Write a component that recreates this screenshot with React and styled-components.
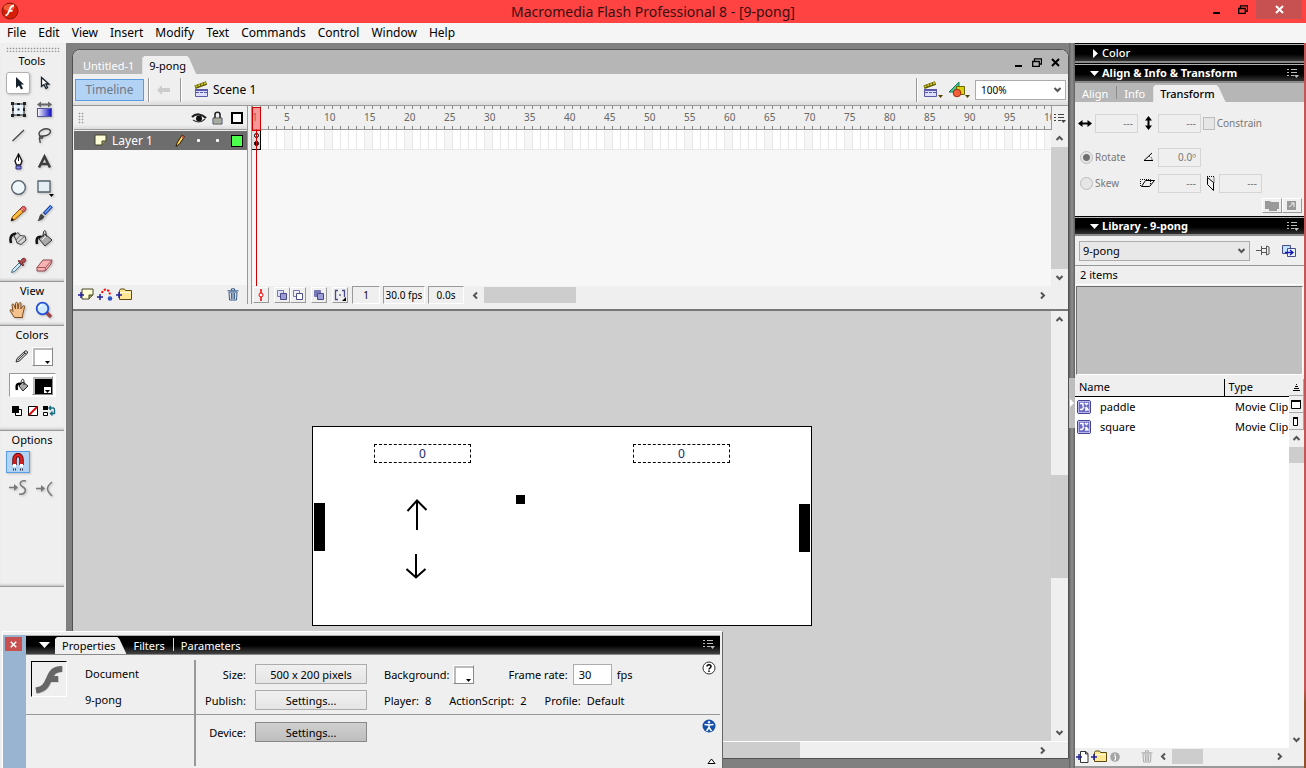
import React, { useState } from "react";

import styled, { createGlobalStyle, css } from "styled-components";

const GlobalStyle = createGlobalStyle`
  * {
    box-sizing: border-box;
  }

  body {
    margin: 0;
    overflow: hidden;
    font-family: "Noto Sans", "Open Sans", sans-serif;
    font-size: 11px;
    color: #000;
    background: #efefef;
  }

  button,
  input,
  select {
    font: inherit;
    color: inherit;
    margin: 0;
    padding: 0;
    border: 0;
    border-radius: 0;
    background: none;
    appearance: none;
    outline: none;
  }

  svg {
    display: block;
    flex-shrink: 0;
  }
`;

const Window = styled.div`
  height: 100vh;
  display: flex;
  flex-direction: column;
`;

const TitleBar = styled.header`
  height: 23px;
  flex-shrink: 0;
  display: grid;
  grid-template-columns: 110px 1fr 110px;
  background: #ff4242;

  h1 {
    margin: 0;
    font-size: 14px;
    line-height: 23px;
    font-weight: 400;
    text-align: center;
    color: #3a0f0f;
  }
`;

const TitleIcon = styled.div`
  padding: 2px 1px;
`;

const WindowButtons = styled.div`
  display: flex;
  justify-content: flex-end;
  padding-right: 4px;

  button {
    width: 26px;
    height: 19px;
    display: flex;
    align-items: center;
    justify-content: center;
  }

  button:last-child {
    width: 46px;
    color: #fff;
    background: #c75050;
  }
`;

const MenuBar = styled.nav`
  height: 20px;
  flex-shrink: 0;
  display: flex;
  gap: 12px;
  padding-left: 7px;
  background: #f5f5f5;

  button {
    font-size: 12px;
    line-height: 20px;
  }
`;

const Workspace = styled.div`
  flex: 1;
  min-height: 0;
  display: flex;
  background: #808080;
`;

/* ---- tools ---- */

const ToolsPanel = styled.aside`
  width: 66px;
  flex-shrink: 0;
  padding-top: 4px;
  background: #efefef;
`;

const Grip = styled.div`
  height: 5px;
  margin: 0 6px;
  background-image: radial-gradient(#999 40%, transparent 50%);
  background-size: 3px 3px;
`;

const ToolSection = styled.section`
  width: 64px;
  min-height: ${({ $height }) => $height}px;
  border-bottom: 1px solid #999;
  box-shadow: inset 0 -3px 3px -2px #bbb;

  h2 {
    margin: 0;
    font-size: 11px;
    line-height: 18px;
    font-weight: 400;
    text-align: center;
  }
`;

const ToolGrid = styled.div`
  display: grid;
  grid-template-columns: 26px 26px;
  grid-auto-rows: ${({ $row }) => $row}px;
  padding-left: 5px;
  align-items: center;
  justify-items: center;
`;

const ToolButton = styled.button`
  width: 24px;
  height: 22px;
  display: flex;
  align-items: center;
  justify-content: center;
  filter: drop-shadow(1px 1px 1px #0003);

  ${({ $selected }) =>
    $selected &&
    css`
      background: #fff;
      border: 1px solid #b0b0b0;
      border-radius: 3px;
    `}

  ${({ $snap }) =>
    $snap &&
    css`
      background: #b3d3f5;
      border: 1px solid #569de5;
    `}
`;

const ColorRows = styled.div`
  display: flex;
  flex-direction: column;
  gap: 5px;
`;

const ColorRow = styled.div`
  height: 24px;
  margin: 0 8px 0 9px;
  padding-left: 5px;
  display: flex;
  align-items: center;
  gap: 3px;
  background: ${({ $active }) => ($active ? "#fff" : "none")};
  border: 1px solid;
  border-color: ${({ $active }) =>
    $active ? "#999 #fff #fff #999" : "transparent"};
`;

const MiniRow = styled.div`
  height: 18px;
  display: flex;
  align-items: center;
  gap: 4px;
  padding-left: 11px;
`;

const Swatch = styled.button`
  width: 21px;
  height: 19px;
  padding: 1px;
  display: flex;
  align-items: flex-end;
  justify-content: flex-end;
  border: 1px solid;
  border-color: #fff #888 #888 #fff;
  background: ${({ $color }) => $color};
  box-shadow: inset 1px 1px 0 1px #bbb;

  span {
    width: 7px;
    height: 6px;
    display: flex;
    align-items: flex-end;
    justify-content: center;
    background: #fff;
  }
`;

/* ---- document ---- */

const DocumentWindow = styled.main`
  flex: 1;
  min-width: 0;
  display: flex;
  flex-direction: column;
  margin: 6px 0 9px 6px;
  border: 1px solid #505050;
  border-radius: 8px 8px 0 0;
  background: #efefef;
  overflow: hidden;
`;

const DocTabs = styled.div`
  height: 24px;
  flex-shrink: 0;
  display: flex;
  align-items: flex-end;
  padding-right: 8px;
  background: #b6b6b6;
`;

const DocTab = styled.button`
  height: ${({ $active }) => ($active ? 18 : 20)}px;
  padding: ${({ $active }) => ($active ? "0 10px 0 7px" : "2px 8px 0 10px")};
  color: ${({ $active }) => ($active ? "#000" : "#fff")};
  background: ${({ $active }) => ($active ? "#efefef" : "none")};
  clip-path: ${({ $active }) =>
    $active
      ? "polygon(0 2px, 2px 0, calc(100% - 9px) 0, calc(100% - 7px) 2px, 100% 100%, 0 100%)"
      : "none"};
`;

const DocButtons = styled.div`
  margin-left: auto;
  height: 24px;
  display: flex;
  align-items: center;
  gap: 9px;
`;

const EditBar = styled.div`
  height: 32px;
  flex-shrink: 0;
  display: flex;
  align-items: center;
  padding: 0 2px;
  border-bottom: 1px solid #999;
  background: linear-gradient(#efefef 80%, #dcdcdc);
`;

const TimelineToggle = styled.button`
  width: 69px;
  height: 22px;
  font-size: 12px;
  color: #6d7885;
  background: #b3d3f5;
  border: 1px solid #569de5;
`;

const Divider = styled.span`
  width: 2px;
  height: 24px;
  margin: ${({ $gap }) => `0 ${$gap}px`};
  border-left: 1px solid #999;
  border-right: 1px solid #fff;
`;

const SceneName = styled.button`
  display: flex;
  align-items: center;
  gap: 4px;
  padding-left: 8px;
  font-size: 12px;
`;

const EditBarEnd = styled.div`
  margin-left: auto;
  display: flex;
  align-items: center;
  gap: 5px;
`;

const SelectBox = styled.div`
  display: grid;
  align-items: center;
  flex: ${({ $grow }) => ($grow ? 1 : "none")};

  select,
  svg {
    grid-area: 1 / 1;
  }

  select {
    width: ${({ $grow }) => ($grow ? "100%" : "91px")};
    height: 20px;
    padding-left: ${({ $grow }) => ($grow ? 3 : 5)}px;
    font-size: ${({ $grow }) => ($grow ? 11 : 10)}px;
    border: 1px solid #acacac;
    background: ${({ $grow }) => ($grow ? "#e8e8e8" : "#fff")};
  }

  svg {
    justify-self: end;
    margin-right: 4px;
    pointer-events: none;
  }
`;

const Timeline = styled.section`
  flex-shrink: 0;
  display: flex;
  border-bottom: 2px solid #777;
  padding-bottom: 5px;
`;

const Layers = styled.div`
  width: 175px;
  flex-shrink: 0;
  display: flex;
  flex-direction: column;
  padding-left: 1px;
  border-right: 1px solid #999;
`;

const LayerHeader = styled.div`
  height: 24px;
  display: flex;
  align-items: center;
  padding: 0 4px;
  border-bottom: 1px solid #999;
  background: linear-gradient(#efefef 80%, #dcdcdc);
`;

const LayerGrip = styled.span`
  width: 6px;
  height: 12px;
  margin-right: auto;
  background-image: radial-gradient(#999 40%, transparent 50%);
  background-size: 3px 3px;
`;

const LayerFlags = styled.div`
  display: grid;
  grid-template-columns: 18px 19px 19px 19px;
  justify-items: center;
  align-items: center;
  margin-right: -3px;
`;

const LayerRow = styled.div`
  height: 19px;
  margin-top: 1px;
  display: flex;
  align-items: center;
  gap: 5px;
  padding: 0 4px 0 20px;
  color: #fff;
  font-size: 12px;
  background: #6d6d6d;

  ${LayerFlags} {
    margin-left: auto;
  }
`;

const FlagDot = styled.i`
  width: 3px;
  height: 3px;
  border-radius: 1px;
  background: #fff;
`;

const Outline = styled.i`
  width: 12px;
  height: 12px;
  border: ${({ $color }) => ($color ? 1 : 2)}px solid #000;
  background: ${({ $color }) => $color || "#fff"};
`;

const LayerSpace = styled.div`
  flex: 1;
  background: #f7f7f7;
`;

const LayerFooter = styled.div`
  height: 19px;
  display: flex;
  align-items: center;
  gap: 3px;
  padding: 0 8px 0 4px;

  button:last-child {
    margin-left: auto;
  }
`;

const Frames = styled.div`
  flex: 1;
  min-width: 0;
  display: flex;
  flex-direction: column;
  margin-left: 3px;
  border-left: 1px solid #999;
`;

const FrameArea = styled.div`
  display: flex;
`;

const FrameTrack = styled.div`
  flex: 1;
  min-width: 0;
  overflow: hidden;
  position: relative;
  height: 180px;
  background: #f7f7f7;
`;

const Ruler = styled.div`
  height: 24px;
  display: flex;
  color: #666;
  font-size: 10px;
  line-height: 23px;
  border-bottom: 1px solid #999;
  background:
    repeating-linear-gradient(90deg, #888 0 1px, transparent 1px 8px) 0 0 / 100%
      3px no-repeat,
    repeating-linear-gradient(90deg, #888 0 1px, transparent 1px 8px) 0 100% /
      100% 3px no-repeat,
    #efefef;

  span {
    width: 40px;
    flex-shrink: 0;
  }

  span:first-child {
    width: 32px;
  }
`;

const FrameRow = styled.div`
  height: 20px;
  border-bottom: 1px solid #e8e8e8;
  background:
    repeating-linear-gradient(90deg, #e8e8e8 0 1px, transparent 1px 8px),
    repeating-linear-gradient(90deg, #fff 0 32px, #f6f6f6 32px 40px);
`;

const Keyframe = styled.div`
  width: 9px;
  height: 20px;
  display: flex;
  flex-direction: column;
  align-items: center;
  justify-content: space-evenly;
  border: 1px solid #000;
  border-width: 0 1px 1px 0;
  background: #ddd;

  i {
    width: 5px;
    height: 5px;
    border: 1px solid #000;
    border-radius: 3px;
  }

  i:last-child {
    background: #000;
  }
`;

/* lies over the ruler and every layer row */
const Playhead = styled.div`
  position: absolute;
  top: 1px;
  bottom: 0;
  left: 0;
  width: 9px;
  background: linear-gradient(#c00, #c00) 4px 22px / 1px 100% no-repeat;

  &::before {
    content: "";
    display: block;
    height: 22px;
    border: 1px solid #c00;
    background: #ff404080;
  }
`;

const FrameSide = styled.div`
  width: 17px;
  flex-shrink: 0;
  display: flex;
  flex-direction: column;
`;

const FrameMenu = styled.button`
  height: 24px;
  display: flex;
  align-items: center;
  justify-content: center;
  border-left: 1px solid #999;
`;

const FrameFooter = styled.div`
  height: 18px;
  display: flex;
  align-items: center;
  padding-left: 1px;
`;

const OnionButton = styled.button`
  width: 16px;
  height: 16px;
  margin-right: ${({ $gap }) => $gap || 0}px;
  display: flex;
  align-items: center;
  justify-content: center;
  border: 1px solid;
  border-color: #fff #999 #999 #fff;
`;

const StatusCell = styled.output`
  width: ${({ $width }) => $width}px;
  height: 18px;
  margin-right: 3px;
  font-size: 10px;
  line-height: 16px;
  text-align: center;
  white-space: nowrap;
  border: 1px solid;
  border-color: #999 #fff #fff #999;
`;

const StageRow = styled.div`
  flex: 1;
  min-height: 0;
  display: flex;
`;

const Pasteboard = styled.div`
  flex: 1;
  min-width: 0;
  display: flex;
  align-items: center;
  justify-content: center;
  background: #cfcfcf;
`;

const Stage = styled.div`
  position: relative;
  width: 500px;
  height: 200px;
  flex-shrink: 0;
  background: #fff;
  border: 1px solid #000;
`;

/* something placed freely on the stage */
const StageItem = styled.div`
  position: absolute;
  left: ${({ $x }) => $x}px;
  top: ${({ $y }) => $y}px;
  width: ${({ $w }) => $w}px;
  height: ${({ $h }) => $h}px;
  background: ${({ $fill }) => $fill || "none"};
`;

const ScoreText = styled(StageItem)`
  font-size: 12px;
  line-height: 17px;
  text-align: center;
  color: #1a2a66;
  border: 1px dashed #000;
`;

/* ---- scroll bars ---- */

const Bar = styled.div`
  display: flex;
  flex: ${({ $fixed }) => ($fixed ? "none" : 1)};
  min-width: 0;
  min-height: 0;
  flex-direction: ${({ $vertical }) => ($vertical ? "column" : "row")};
  ${({ $vertical }) => ($vertical ? "width" : "height")}: ${({ $size }) =>
    $size}px;
  background: #efefef;

  button {
    display: flex;
    align-items: center;
    justify-content: center;
    ${({ $vertical }) => ($vertical ? "height" : "width")}: 17px;
  }
`;

const BarPart = styled.span`
  flex: ${({ $part }) => $part} 1 0;
  background: ${({ $thumb }) => ($thumb ? "#cdcdcd" : "none")};
`;

const StageFooter = styled.div`
  height: 17px;
  flex-shrink: 0;
  display: flex;
  border-top: 1px solid #fff;
`;

/* ---- right dock ---- */

const Splitter = styled.div`
  width: 6px;
  flex-shrink: 0;
  display: flex;
  align-items: center;
  background: linear-gradient(90deg, #606060, #909090 50%, #606060);

  button {
    width: 6px;
    height: 50px;
    margin-bottom: 6px;
    background: #bdbdbd;
    display: flex;
    align-items: center;
  }
`;

const Dock = styled.aside`
  width: 229px;
  flex-shrink: 0;
  display: flex;
  flex-direction: column;
  background: #efefef;
`;

const WindowEdge = styled.div`
  width: 2px;
  flex-shrink: 0;
  background: linear-gradient(#c85555 89%, #94502a 91%);
`;

const PanelHeader = styled.div`
  height: 20px;
  flex-shrink: 0;
  display: flex;
  align-items: center;
  padding: 1px 5px 0 15px;
  color: #fff;
  border-top: 1px solid #000;
  border-bottom: 2px solid #8a8a8a;
  background: linear-gradient(#b0b0b0 1px, #000 1px, #000 60%, #333);

  h2 {
    margin: 0 auto 0 0;
    font-size: 11px;
    line-height: 16px;
    font-weight: ${({ $open }) => ($open ? 700 : 500)};
  }
`;

const Disclosure = styled.button`
  width: 12px;
  height: 12px;
  display: flex;
  align-items: center;
`;

const PanelTabs = styled.div`
  height: 19px;
  flex-shrink: 0;
  display: flex;
  align-items: flex-end;
  background: #b6b6b6;
`;

const PanelTab = styled.button`
  height: 17px;
  padding: ${({ $active }) => ($active ? "0 11px 0 7px" : "0 8px 0 7px")};
  line-height: 17px;
  color: ${({ $active }) => ($active ? "#000" : "#fff")};
  font-weight: ${({ $active }) => ($active ? 500 : 400)};
  background: ${({ $active }) => ($active ? "#efefef" : "none")};
  clip-path: ${({ $active }) =>
    $active
      ? "polygon(0 2px, 2px 0, calc(100% - 9px) 0, calc(100% - 7px) 2px, 100% 100%, 0 100%)"
      : "none"};
`;

const TransformForm = styled.div`
  flex-shrink: 0;
  height: 114px;
  color: #777;
  font-size: 10px;
  padding-top: 8px;
`;

const TransformRow = styled.div`
  display: grid;
  grid-template-columns: 20px 43px 20px 43px 18px 43px;
  align-items: center;
  height: 26px;
  margin-bottom: ${({ $apart }) => ($apart ? 8 : 0)}px;

  svg {
    justify-self: center;
  }

  label {
    display: flex;
    align-items: center;
    gap: 2px;
  }
`;

const TransformField = styled.input`
  width: 43px;
  height: 19px;
  padding-right: 4px;
  text-align: right;
  border: 1px solid #d5d5d5;
`;

const RadioLabel = styled.label`
  grid-column: span 2;
  padding-left: 5px;
`;

const Radio = styled.input`
  width: 13px;
  height: 13px;
  border: 1px solid #bcbcbc;
  border-radius: 50%;
  background: #e6e6e6;

  &:checked {
    background: radial-gradient(#707070 3px, #e6e6e6 4px);
  }
`;

const ConstrainLabel = styled.label`
  grid-column: span 2;
  padding-left: 2px;
  white-space: nowrap;
`;

const Checkbox = styled.input`
  width: 13px;
  height: 13px;
  border: 1px solid #bcbcbc;
  background: #e6e6e6;
`;

const TransformActions = styled.div`
  display: flex;
  justify-content: flex-end;
  padding: 2px 2px 0;

  button {
    width: 20px;
    height: 15px;
    display: flex;
    align-items: center;
    justify-content: center;
    border: 1px solid;
    border-color: #fff #999 #999 #fff;
  }
`;

const LibraryBar = styled.div`
  height: 30px;
  flex-shrink: 0;
  display: flex;
  align-items: center;
  gap: 6px;
  padding: 0 7px 0 4px;
  border-bottom: 1px solid #999;

  button:last-child {
    margin-left: 6px;
  }
`;

const ItemCount = styled.p`
  margin: 0;
  padding-left: 5px;
  line-height: 18px;
  border-bottom: 1px solid #fff;
`;

const Preview = styled.div`
  height: 89px;
  flex-shrink: 0;
  margin: 1px 1px 4px;
  background: #c0c0c0;
  border: 1px solid;
  border-color: #707070 #fff #fff #707070;
`;

const Listing = styled.div`
  flex: 1;
  min-height: 0;
  display: flex;
`;

const TableHolder = styled.div`
  flex: 1;
  min-width: 0;
  background: #fff;
`;

const ItemTable = styled.table`
  width: 100%;
  table-layout: fixed;
  border-collapse: collapse;

  th {
    height: 17px;
    padding: 0 0 0 4px;
    font-weight: 400;
    line-height: 16px;
    text-align: left;
    background: #efefef;
    border-bottom: 1px solid #000;
  }

  th:first-child {
    width: 149px;
    border-right: 1px solid #000;
  }

  td {
    height: 20px;
    padding: 0 0 0 11px;
    overflow: hidden;
    white-space: nowrap;
    line-height: 20px;
  }

  td:first-child {
    padding-left: 2px;
  }
`;

const ItemName = styled.span`
  display: flex;
  align-items: center;
  gap: 9px;
`;

const ListSide = styled.div`
  width: 15px;
  display: flex;
  flex-direction: column;

  > button {
    height: 17px;
    flex-shrink: 0;
    display: flex;
    align-items: center;
    justify-content: center;
    border-bottom: 1px solid #aaa;
    border-right: 1px solid #aaa;
  }
`;

const LibraryFooter = styled.div`
  height: 20px;
  flex-shrink: 0;
  display: flex;
  align-items: center;
  gap: 2px;
  padding: 0 16px 1px 1px;
  border-bottom: 2px solid #999;
`;

const IconButton = styled.button`
  display: flex;
  align-items: center;
  margin-left: ${({ $gap }) => $gap || 0}px;
`;

/* ---- floating properties window ---- */

const Floating = styled.section`
  position: absolute;
  left: 2px;
  bottom: 0;
  width: 721px;
  height: 137px;
  display: flex;
  padding: 3px 2px 0 0;
  background: #efefef;
  border: 1px solid;
  border-color: #fff #666 transparent #fff;
  border-bottom: 0;
`;

const FloatHandle = styled.div`
  width: 23px;
  padding: 2px 2px;
  background: #99b4d1;

  button {
    width: 17px;
    height: 14px;
    display: flex;
    align-items: center;
    justify-content: center;
    background: #c75050;
    color: #fff;
  }
`;

const FloatMain = styled.div`
  flex: 1;
  display: flex;
  flex-direction: column;
`;

const FloatTabs = styled.div`
  height: 20px;
  display: flex;
  align-items: flex-end;
  padding: 0 5px 0 13px;
  background: linear-gradient(#b0b0b0 1px, #000 1px, #000 55%, #444);
  border-bottom: 1px solid #8a8a8a;

  ${PanelTab} {
    font-weight: 400;
  }

  ${Disclosure} {
    width: 16px;
    height: 17px;
  }
`;

const TabRule = styled.span`
  width: 1px;
  height: 13px;
  align-self: center;
  background: ${({ $light }) => ($light ? "#d8d8d8" : "#8c8c8c")};
`;

const MenuEnd = styled.button`
  margin-left: auto;
  align-self: center;
`;

const PropsBody = styled.div`
  flex: 1;
  display: flex;
`;

const PropsLeft = styled.div`
  width: 168px;
  display: flex;
  flex-direction: column;
`;

const DocInfo = styled.div`
  height: 60px;
  padding: 6px 5px;
  display: flex;
  gap: 18px;
  border-bottom: 1px solid #999;

  p {
    margin: 0;
    line-height: 26px;
  }
`;

const DocIcon = styled.div`
  width: 36px;
  height: 36px;
  border: 1px solid;
  border-color: #000 #fff #fff #000;
`;

const PropsRule = styled.div`
  width: 2px;
  margin: 5px 0 2px;
  background: #999;
`;

const PropsRight = styled.div`
  flex: 1;
  display: flex;
  flex-direction: column;
`;

const PropsGroup = styled.div`
  height: ${({ $last }) => ($last ? "auto" : "60px")};
  flex: ${({ $last }) => ($last ? 1 : "none")};
  padding-top: ${({ $last }) => ($last ? 4 : 6)}px;
  border-bottom: ${({ $last }) => ($last ? 0 : "1px solid #999")};
`;

const PropsRow = styled.div`
  height: 26px;
  display: grid;
  grid-template-columns: 50px 111px 1fr auto;
  align-items: center;
  padding-right: 4px;

  > label {
    text-align: right;
  }

  > button {
    margin-left: 9px;
  }
`;

const PushButton = styled.button`
  width: 112px;
  height: 20px;
  border: 1px solid ${({ $pressed }) => ($pressed ? "#888" : "#acacac")};
  background: ${({ $pressed }) =>
    $pressed
      ? "linear-gradient(#cfcfcf, #bebebe)"
      : "linear-gradient(#f0f0f0, #e5e5e5)"};
`;

const CornerButton = styled.button`
  align-self: start;
`;

const Inline = styled.div`
  display: flex;
  align-items: center;
  gap: ${({ $gap }) => $gap}px;
  padding-left: 27px;
`;

const RateLabel = styled.label`
  display: flex;
  align-items: center;
  gap: 5px;
  margin-left: 32px;

  input {
    width: 39px;
    height: 21px;
    padding-left: 5px;
    background: #fff;
    border: 1px solid #acacac;
  }
`;

const Fact = styled.span`
  display: flex;
  gap: 6px;
`;

const Corner = styled.button`
  display: flex;
  margin-left: auto;
  padding: 13px 4px 0 0;
`;

/* ---- icons ---- */

const Svg = ({ w = 16, h = w, children, ...rest }) => (
  <svg width={w} height={h} viewBox={`0 0 ${w} ${h}`} fill="none" {...rest}>
    {children}
  </svg>
);

const FlashLogo = () => (
  <Svg w={18}>
    <circle cx="9" cy="9" r="8" fill="#d81e05" stroke="#8b1a0c" />
    <ellipse cx="8" cy="5.5" rx="5.5" ry="3.5" fill="#ff7450" opacity=".7" />
    <path d="M13 3.500c-3 0-3.600 2-4.500 4.500S7 13 4.500 13.700M8 8.800h3.500" stroke="#fff" strokeWidth="1.800" />
  </Svg>
);

const BigF = () => (
  <Svg w={34}>
    <path d="M31 7c-8 0-10 3-13 10S13 28 5 29M17 17.500h10" stroke="#c4c4c4" strokeWidth="6" />
    <path d="M30 7c-8 0-10 3-13 10S12 27 4 28.500M16 17h10" stroke="#666" strokeWidth="6" />
  </Svg>
);

const Chevron = ({ dir = "down" }) => {
  const turn = { down: 0, left: 90, up: 180, right: 270 }[dir];
  return (
    <Svg w={9}>
      <path
        d="M1.500 3L4.500 6L7.500 3"
        stroke="#555"
        strokeWidth="2"
        transform={`rotate(${turn} 4.5 4.5)`}
      />
    </Svg>
  );
};

const Caret = () => (
  <Svg w={5} h={3}>
    <path d="M0 0h5L2.500 3z" fill="#000" />
  </Svg>
);

const Restore = () => (
  <Svg w={10} h={9}>
    <path d="M2.500 3V.8h7v5.200H7.500M.7 3.500h6.600v4.800H.7z" stroke="currentColor" strokeWidth="1.300" />
  </Svg>
);

const Minimize = () => (
  <Svg w={8} h={9}>
    <path d="M0 8h7" stroke="currentColor" strokeWidth="2" />
  </Svg>
);

const Close = ({ size = 9 }) => (
  <svg width={size} height={size} viewBox="0 0 9 9" fill="none">
    <path d="M1 1l7 7M8 1L1 8" stroke="currentColor" strokeWidth="2" />
  </svg>
);

const PanelMenu = ({ color = "#bbb" }) => (
  <Svg w={12} h={11}>
    <path d="M0 1.500h2M4 1.500h6M0 4.500h2M4 4.500h6M0 7.500h2M4 7.500h3" stroke={color} />
    <path d="M7 7h5l-2.500 3z" fill={color} />
  </Svg>
);

const Clapper = ({ caret }) => (
  <Svg w={caret ? 20 : 15} h={17}>
    <path d="M1 6.200L12.500 2" stroke="#5d5a00" strokeWidth="3.600" />
    <path d="M1.500 5.700L12 1.800" stroke="#d2c81e" strokeWidth="1.800" strokeDasharray="2 1" />
    <path d="M1.500 8.500h12v7h-12z" fill="#dedeff" stroke="#5a5aa8" />
    <path d="M1 9h13" stroke="#5a5aa8" strokeWidth="2" />
    <path d="M2 11.500h11" stroke="#5a5aa8" strokeDasharray="3 1" />
    {caret && <path d="M15 14h5l-2.500 3z" fill="#554400" />}
  </Svg>
);

const Shapes = () => (
  <Svg w={22} h={17}>
    <path d="M1 11L11 1v10z" fill="#3ecb91" stroke="#16785a" />
    <path d="M8.500 5.500h8v8h-8z" fill="#d8d010" stroke="#6c6500" />
    <circle cx="9" cy="12" r="3.800" fill="#f0603a" stroke="#a12c10" />
    <path d="M17 14h5l-2.500 3z" fill="#554400" />
  </Svg>
);

const Trash = ({ color = "#31588a" }) => (
  <Svg w={12} h={13}>
    <path d="M2 4h8l-.5 8h-7zM.5 2.800h11M4.500 2.500V.8h3v1.700M4.400 5v6M6 5v6M7.600 5v6" stroke={color} />
  </Svg>
);

const Plus = () => <path d="M0 7h6M3 4v6" stroke="#22229a" strokeWidth="1.500" />;

const Sheet = ({ plus }) => (
  <Svg w={plus ? 16 : 13} h={13}>
    <g transform={plus ? "translate(3 0)" : ""}>
      <path d="M1 1h11v6l-4 4H1z" fill="#ffffd8" stroke="#44442a" />
      <path d="M12 7H8v4" fill="#9b9b60" stroke="#44442a" />
    </g>
    {plus && <Plus />}
  </Svg>
);

const MotionGuide = () => (
  <Svg w={16} h={13}>
    <path d="M5 5c1-5 8-5 8 3" stroke="#f00" strokeWidth="2" strokeDasharray="2 1.500" />
    <path d="M0 9h6M3 6v6" stroke="#22229a" strokeWidth="1.500" />
    <circle cx="13" cy="10.500" r="2.300" fill="#2f55c5" />
  </Svg>
);

const Folder = () => (
  <Svg w={16} h={13}>
    <path d="M3.500 11.500v-9l1-1.500h4l1 1.500h6v9z" fill="#ffe794" stroke="#5d4a12" />
    <path d="M4 4.500h11" stroke="#fff8d8" />
    <Plus />
  </Svg>
);

const NewSymbol = () => (
  <Svg w={13} h={13}>
    <path d="M4.500 1.500h5l2.500 2v9H4.500zM9.500 1v3H12" fill="#fff" stroke="#333" />
    <Plus />
  </Svg>
);

const InfoDot = () => (
  <Svg w={12}>
    <circle cx="6" cy="6" r="4.800" fill="#a5a5a5" />
    <path d="M6 2.500v1.500M5 5h1.500v4H5" stroke="#fff" />
  </Svg>
);

const ClipIcon = () => (
  <Svg w={14}>
    <rect x=".5" y=".5" width="13" height="13" rx="1.500" fill="#6c6cc4" stroke="#444490" />
    <rect x="1.500" y="1.500" width="11" height="11" fill="none" stroke="#b8b8ee" />
    <path d="M3 3.500h3v3M7 7L5 9.500H3M8 3l1.500 1.500L11 3M9 7l2.500 3.500M9 7v4" stroke="#fff" strokeWidth="1.500" />
  </Svg>
);

const TOOLS = {
  Selection: (
    <Svg w={17}>
      <path d="M6 2v11l3-2.500 2 4 2-1-2-4h3z" fill="#16202c" />
    </Svg>
  ),
  Subselection: (
    <Svg w={17}>
      <path d="M5.500 2.500v9l2.500-2 2 4 1.500-1-1.700-3.500h3z" fill="#fff" stroke="#16202c" strokeWidth="1.300" />
    </Svg>
  ),
  "Free Transform": (
    <Svg w={17}>
      <rect x="3" y="3" width="11" height="11" fill="#eaf4ff" stroke="#222" />
      <path d="M1 1h3v3H1zM13 1h3v3h-3zM1 13h3v3H1zM13 13h3v3h-3zM7 2h3v2H7zM7 13h3v2H7zM2 7h2v3H2zM13 7h2v3h-2zM7.500 7.500h2v2h-2z" fill="#222" />
    </Svg>
  ),
  "Gradient Transform": (
    <Svg w={17}>
      <defs>
        <linearGradient id="fade">
          <stop stopColor="#fff" />
          <stop offset="1" stopColor="#0a0ac0" />
        </linearGradient>
      </defs>
      <rect x="1.500" y="7.500" width="14" height="8" fill="url(#fade)" stroke="#555598" />
      <path d="M1 3.500L5 .5v2h7v-2l4 3-4 3v-2H5v2z" fill="#666" />
    </Svg>
  ),
  Line: (
    <Svg w={17}>
      <path d="M2.500 14L14 3" stroke="#444" strokeWidth="1.200" />
    </Svg>
  ),
  Lasso: (
    <Svg w={17}>
      <path d="M5 10C-1 5 8 1 12 2c5 1 2 7-5 7-5 0-3 3-1 2s0-3-2-1c-2 2 1 4 0 6" stroke="#444" strokeWidth="1.400" />
    </Svg>
  ),
  Pen: (
    <Svg w={17}>
      <path d="M8.500 1L5 8l1.500 4h4L12 8z" fill="#fff" stroke="#111" strokeWidth="1.300" />
      <path d="M8.500 2v6" stroke="#111" />
      <path d="M6 13h5v3H6z" fill="#8a8ae0" stroke="#333388" />
    </Svg>
  ),
  Text: (
    <Svg w={17}>
      <path d="M3 14.500L8.500 3.500 14 14.500M5.500 11h6" stroke="#3b3b3b" strokeWidth="2.500" />
    </Svg>
  ),
  Oval: (
    <Svg w={17}>
      <circle cx="8.500" cy="8.500" r="6.800" fill="#eef6fa" stroke="#54616b" strokeWidth="1.300" />
    </Svg>
  ),
  Rectangle: (
    <Svg w={19}>
      <path d="M3 3h12v11H3z" fill="#e6eef3" stroke="#54616b" strokeWidth="1.300" />
      <path d="M14 16h5l-2.500 3z" fill="#000" />
    </Svg>
  ),
  Pencil: (
    <Svg w={17}>
      <path d="M1 16l1.500-4.500L12 2l3.500 3L5 14.500z" fill="#f6a821" stroke="#8a5510" />
      <path d="M12 2c2-2 5 1 3.500 3l-2 2-3.500-3z" fill="#e4696a" stroke="#8e3033" />
      <path d="M3.500 13l9-9" stroke="#ffe090" />
      <path d="M1 16l.8-3 2.200 2z" fill="#000" />
    </Svg>
  ),
  Brush: (
    <Svg w={17}>
      <path d="M8 9l7.500-8" stroke="#1d3d9e" strokeWidth="3.500" />
      <path d="M9 8l6-6.500" stroke="#6fb0ff" strokeWidth="1.300" />
      <path d="M1 16c3-1 1-6 5-7.500L8.500 11C8 14 4 16 1 16z" fill="#444" />
      <path d="M6 8.500L9 11" stroke="#ccc" strokeWidth="1.500" />
    </Svg>
  ),
  "Ink Bottle": (
    <Svg w={18}>
      <path d="M2 13c-1.500-5 0-9 5-9.500" stroke="#111" strokeWidth="2.500" />
      <path d="M5 6l4-3.500 2 3 5 .5 1 4-5 4.500-4-1.500-1-3z" fill="#d5d5d5" stroke="#444" />
      <path d="M5 6l2.500 4M11 5.500L7 10M8 13l8-7" stroke="#666" />
    </Svg>
  ),
  "Paint Bucket": (
    <Svg w={18}>
      <path d="M2 14c-1-5 0-8 5-7" stroke="#111" strokeWidth="2.500" />
      <path d="M4 9l6-5 7 6-7 6z" fill="#aaa" stroke="#333" />
      <path d="M8 7c0-8 3-8 3-3v3" stroke="#222" />
      <path d="M7 10l4-4" stroke="#eee" />
    </Svg>
  ),
  Eyedropper: (
    <Svg w={17}>
      <path d="M1.500 15.500l1-3L9 6l2 2-6.500 6.500z" fill="#cde7f5" stroke="#4b6f88" />
      <path d="M8 4l5 5 .7-1.500L12 6c5 0 4.500-6 1-4.500-1.500.5-2 2-2.500 3L9 3.500z" fill="#b24c4c" stroke="#70282b" />
    </Svg>
  ),
  Eraser: (
    <Svg w={17}>
      <path d="M1 10.500L7 3h9l-1 4-6 7H1z" fill="#f6b3b4" stroke="#94484d" />
      <path d="M1 10.500h8.500L16 3M9.500 10.500L9 14" stroke="#a6555b" />
    </Svg>
  ),
};

const VIEW_TOOLS = {
  Hand: (
    <Svg w={18}>
      <path d="M5 16L1 9.500c0-1.500 1.500-1 3 1L3 4c0-1.500 1.500-1.500 2 0l1.500 4V2.500c0-1.500 2-1.500 2 0L9 8l1-5.500c.5-1.500 2-1 2 0L11.800 8 14 5c1-1 2 0 1.500 1l-2 8.500v2H6z" fill="#f5c28e" stroke="#7c4c1f" />
    </Svg>
  ),
  Zoom: (
    <Svg w={18}>
      <path d="M11 11l5 5" stroke="#9c4246" strokeWidth="3.500" />
      <circle cx="7.500" cy="7.500" r="5.800" fill="#cfeaff" stroke="#2350d8" strokeWidth="1.800" />
      <path d="M4 7c0-2 2-3 3-3" stroke="#fff" strokeWidth="1.500" />
    </Svg>
  ),
};

const StrokePencil = () => (
  <Svg w={14}>
    <path d="M1 13l1-3.500L10 2c1-1 3 .5 2.500 2L4.500 12z" fill="#ccc" stroke="#333" />
    <path d="M3 11l7-7M9 3l2.500 2.500" stroke="#444" />
  </Svg>
);

const FillBucket = () => (
  <Svg w={14}>
    <path d="M2 12c-1-5 0-7 4-6" stroke="#000" strokeWidth="2.500" />
    <path d="M4 8l4-4 5 4-5 5z" fill="#aaa" stroke="#222" />
    <path d="M6 6c0-6 3-6 3-2v3" stroke="#222" />
  </Svg>
);

const BlackWhite = () => (
  <Svg w={12}>
    <path d="M4.500 4.500h6v6h-6z" fill="#fff" stroke="#000" />
    <path d="M1 1h7v7H1z" fill="#000" />
  </Svg>
);

const NoColor = () => (
  <Svg w={12}>
    <path d="M1.500 1.500h9v9h-9z" fill="#fff" stroke="#000" />
    <path d="M2 10L10 2" stroke="#d00" strokeWidth="1.800" />
  </Svg>
);

const SwapColors = () => (
  <Svg w={13} h={12}>
    <path d="M0 1h5v4H0z" fill="#000" />
    <path d="M.5 7.500h4v3h-4z" fill="#fff" stroke="#000" />
    <path d="M6 3h4.500q1 0 1 2v3.500H8M8 1L6 3l2 2M9.500 6.500l-2 2 2 2" stroke="#176c80" strokeWidth="1.400" />
  </Svg>
);

const Magnet = () => (
  <Svg w={14} h={18}>
    <path d="M3.500 12V6.500c0-6 7-6 7 0V12" stroke="#5c0a0a" strokeWidth="4.500" />
    <path d="M3.500 12V6.500c0-6 7-6 7 0V12" stroke="#e22020" strokeWidth="2.600" />
    <path d="M2 12.500h3M9 12.500h3" stroke="#fff" strokeWidth="3" />
    <path d="M2.500 15.500v2M4.500 15.500v2M9.500 15.500v2M11.500 15.500v2" stroke="#334" />
  </Svg>
);

const SmoothIcon = () => (
  <Svg w={18}>
    <path d="M0 8.500h6" stroke="#777" strokeWidth="1.500" />
    <path d="M5 5l4 3.500L5 12z" fill="#777" />
    <path d="M17 2c-7-1-7 4-3 6s3 8-4 7" stroke="#777" strokeWidth="1.500" />
  </Svg>
);

const StraightenIcon = () => (
  <Svg w={17}>
    <path d="M0 8.500h6" stroke="#777" strokeWidth="1.500" />
    <path d="M5 5l4 3.500L5 12z" fill="#777" />
    <path d="M16 2c-6 5-6 8 0 14" stroke="#777" strokeWidth="1.500" />
  </Svg>
);

const Eye = () => (
  <Svg w={16} h={12}>
    <path d="M1 5c4-4 10-3 14 1" stroke="#222" strokeWidth="2.200" />
    <path d="M2 8c3 2 8 3 12-1" stroke="#444" strokeWidth="1.300" />
    <circle cx="8" cy="6.500" r="3" fill="#111" />
  </Svg>
);

const Lock = () => (
  <Svg w={11} h={14}>
    <path d="M3 7V3.500c0-3 5-3 5 0V7" stroke="#222" strokeWidth="1.600" />
    <path d="M1 7h9v6H1z" fill="#ecd98f" stroke="#3c4460" />
    <path d="M2 9h7M2 11h7" stroke="#5e7fb5" />
  </Svg>
);

const LayerPencil = () => (
  <Svg w={10} h={13}>
    <path d="M1 12.500L2 9l5-8 2.500 1.500L4.500 10z" fill="#ffd54f" stroke="#2e1b05" />
    <path d="M6.500 2L9 3.500" stroke="#c04040" strokeWidth="2" />
  </Svg>
);

const OnionIcon = ({ back, front }) => (
  <Svg w={12}>
    <path d="M1.500 1.500h6v6h-6z" fill={back} stroke="#7777b5" />
    <path d="M4.500 4.500h6v6h-6z" fill={front} stroke="#4a4a88" />
  </Svg>
);

/* ---- pieces ---- */

const ScrollBar = ({ vertical, size, parts, name, fixed }) => (
  <Bar $vertical={vertical} $size={size} $fixed={fixed}>
    <button aria-label={`${name} back`}>
      <Chevron dir={vertical ? "up" : "left"} />
    </button>
    <BarPart $part={parts[0]} />
    <BarPart $part={parts[1]} $thumb />
    <BarPart $part={parts[2]} />
    <button aria-label={`${name} forward`}>
      <Chevron dir={vertical ? "down" : "right"} />
    </button>
  </Bar>
);

const ColorSwatch = ({ color, label }) => (
  <Swatch $color={color} aria-label={label}>
    <span>
      <Caret />
    </span>
  </Swatch>
);

const Header = ({ title, open, menu }) => (
  <PanelHeader $open={open}>
    <Disclosure aria-label={`Toggle ${title}`}>
      <Svg w={9}>
        <path d={open ? "M0 2h9L4.500 7z" : "M3 0v9l5-4.500z"} fill="#fff" />
      </Svg>
    </Disclosure>
    <h2>{title}</h2>
    {menu && (
      <button aria-label={`${title} options`}>
        <PanelMenu />
      </button>
    )}
  </PanelHeader>
);

const MENUS = [
  "File",
  "Edit",
  "View",
  "Insert",
  "Modify",
  "Text",
  "Commands",
  "Control",
  "Window",
  "Help",
];

const RULER = [1, ...Array.from({ length: 20 }, (_, i) => (i + 1) * 5)];

const ITEMS = [
  { name: "paddle", type: "Movie Clip" },
  { name: "square", type: "Movie Clip" },
];

const Tools = () => {
  const [tool, setTool] = useState("Selection");

  return (
    <ToolsPanel>
      <Grip />
      <ToolSection $height={230}>
        <h2>Tools</h2>
        <ToolGrid $row={26}>
          {Object.keys(TOOLS).map((name) => (
            <ToolButton
              key={name}
              aria-label={name}
              $selected={name === tool}
              onClick={() => setTool(name)}
            >
              {TOOLS[name]}
            </ToolButton>
          ))}
        </ToolGrid>
      </ToolSection>
      <ToolSection $height={44}>
        <h2>View</h2>
        <ToolGrid $row={20}>
          {Object.keys(VIEW_TOOLS).map((name) => (
            <ToolButton key={name} aria-label={name}>
              {VIEW_TOOLS[name]}
            </ToolButton>
          ))}
        </ToolGrid>
      </ToolSection>
      <ToolSection $height={105}>
        <h2>Colors</h2>
        <ColorRows>
          <ColorRow>
            <StrokePencil />
            <ColorSwatch color="#fff" label="Stroke color" />
          </ColorRow>
          <ColorRow $active>
            <FillBucket />
            <ColorSwatch color="#000" label="Fill color" />
          </ColorRow>
          <MiniRow>
            <button aria-label="Black and white">
              <BlackWhite />
            </button>
            <button aria-label="No color">
              <NoColor />
            </button>
            <button aria-label="Swap colors">
              <SwapColors />
            </button>
          </MiniRow>
        </ColorRows>
      </ToolSection>
      <ToolSection $height={156}>
        <h2>Options</h2>
        <ToolGrid $row={26}>
          <ToolButton $snap aria-label="Snap to objects">
            <Magnet />
          </ToolButton>
          <span />
          <ToolButton aria-label="Smooth">
            <SmoothIcon />
          </ToolButton>
          <ToolButton aria-label="Straighten">
            <StraightenIcon />
          </ToolButton>
        </ToolGrid>
      </ToolSection>
    </ToolsPanel>
  );
};

const TimelinePanel = () => (
  <Timeline>
    <Layers>
      <LayerHeader>
        <LayerGrip />
        <LayerFlags>
          <span />
          <Eye />
          <Lock />
          <Outline />
        </LayerFlags>
      </LayerHeader>
      <LayerRow>
        <Sheet />
        Layer 1
        <LayerFlags>
          <LayerPencil />
          <FlagDot />
          <FlagDot />
          <Outline $color="#4cff4c" />
        </LayerFlags>
      </LayerRow>
      <LayerSpace />
      <LayerFooter>
        <button aria-label="Insert layer">
          <Sheet plus />
        </button>
        <button aria-label="Add motion guide">
          <MotionGuide />
        </button>
        <button aria-label="Insert layer folder">
          <Folder />
        </button>
        <button aria-label="Delete layer">
          <Trash />
        </button>
      </LayerFooter>
    </Layers>
    <Frames>
      <FrameArea>
        <FrameTrack>
          <Ruler>
            {RULER.map((n) => (
              <span key={n}>{n}</span>
            ))}
          </Ruler>
          <FrameRow>
            <Keyframe>
              <i />
              <i />
            </Keyframe>
          </FrameRow>
          <Playhead />
        </FrameTrack>
        <FrameSide>
          <FrameMenu aria-label="Frame view">
            <PanelMenu color="#444" />
          </FrameMenu>
          <ScrollBar vertical size={17} parts={[0, 1, 0]} name="Layers" />
        </FrameSide>
      </FrameArea>
      <FrameFooter>
        <OnionButton $gap={5} aria-label="Center frame">
          <Svg w={10} h={12}>
            <path d="M5 0v12" stroke="#e00" strokeWidth="1.500" />
            <circle cx="5" cy="6" r="2" fill="#fff" stroke="#e00" />
          </Svg>
        </OnionButton>
        <OnionButton aria-label="Onion skin">
          <OnionIcon back="#ddddf4" front="#9c9cd4" />
        </OnionButton>
        <OnionButton $gap={5} aria-label="Onion skin outlines">
          <OnionIcon back="#efefef" front="#fff" />
        </OnionButton>
        <OnionButton $gap={5} aria-label="Edit multiple frames">
          <OnionIcon back="#7777b5" front="#9c9cd4" />
        </OnionButton>
        <OnionButton $gap={4} aria-label="Modify onion markers">
          <Svg w={12}>
            <path d="M4 1.500H1.500v9H4M8 1.500h2.500V8M6 5v2" stroke="#4a4a88" strokeWidth="1.300" />
            <path d="M12 8v4H8z" fill="#000" />
          </Svg>
        </OnionButton>
        <StatusCell $width={28}>1</StatusCell>
        <StatusCell $width={42}>30.0 fps</StatusCell>
        <StatusCell $width={36}>0.0s</StatusCell>
        <ScrollBar size={16} parts={[0, 92, 457]} name="Frames" />
        <FrameSide />
      </FrameFooter>
    </Frames>
  </Timeline>
);

const StageArea = () => (
  <>
    <StageRow>
      <Pasteboard>
        <Stage>
          <ScoreText $x={61} $y={17} $w={97} $h={19}>
            0
          </ScoreText>
          <ScoreText $x={320} $y={17} $w={97} $h={19}>
            0
          </ScoreText>
          <StageItem $x={1} $y={76} $w={11} $h={48} $fill="#000" />
          <StageItem $x={486} $y={77} $w={11} $h={48} $fill="#000" />
          <StageItem $x={203} $y={68} $w={9} $h={9} $fill="#000" />
          <StageItem $x={93} $y={72} $w={22} $h={80}>
            <Svg w={22} h={80} stroke="#000" strokeWidth="2">
              <path d="M1.500 12L11 1.500 20.500 11M11 2v29" />
              <path d="M10 55v23M.5 70L10 78.500 19.500 70" />
            </Svg>
          </StageItem>
        </Stage>
      </Pasteboard>
      <ScrollBar
        vertical
        fixed
        size={17}
        parts={[147, 104, 146]}
        name="Stage vertical"
      />
    </StageRow>
    <StageFooter>
      <ScrollBar size={16} parts={[234, 476, 234]} name="Stage horizontal" />
      <FrameSide />
    </StageFooter>
  </>
);

const TransformPanel = () => (
  <TransformForm>
    <TransformRow $apart>
      <Svg w={14} h={9}>
        <path d="M0 4.500L4.500 1v7zM14 4.500L9.500 1v7z" fill="#000" />
        <path d="M3 4.500h8" stroke="#000" strokeWidth="2" />
      </Svg>
      <TransformField aria-label="Width" defaultValue="---" />
      <Svg w={9} h={14}>
        <path d="M4.500 0L1 4.500h7zM4.500 14L1 9.500h7z" fill="#000" />
        <path d="M4.500 3v8" stroke="#000" strokeWidth="2" />
      </Svg>
      <TransformField aria-label="Height" defaultValue="---" />
      <ConstrainLabel>
        <Checkbox type="checkbox" />
        Constrain
      </ConstrainLabel>
    </TransformRow>
    <TransformRow>
      <RadioLabel>
        <Radio type="radio" name="mode" defaultChecked />
        Rotate
      </RadioLabel>
      <Svg w={11} h={10}>
        <path d="M9 1L1 8.500h9" stroke="#000" />
        <path d="M6 4q3 1 3 4" stroke="#000" strokeDasharray="1 1" />
      </Svg>
      <TransformField aria-label="Rotation" defaultValue="0.0º" />
    </TransformRow>
    <TransformRow>
      <RadioLabel>
        <Radio type="radio" name="mode" />
        Skew
      </RadioLabel>
      <Svg w={16} h={9}>
        <path d="M5.500 1.500h9l-5 6h-8z" stroke="#000" />
        <path d="M.5 7V.5h10v7" stroke="#000" strokeDasharray="1 1" />
      </Svg>
      <TransformField aria-label="Skew horizontally" defaultValue="---" />
      <Svg w={9} h={15}>
        <path d="M1.500 1.500l6 5v8l-6-6z" stroke="#000" />
        <path d="M1 .5h7v7" stroke="#000" strokeDasharray="1 1" />
      </Svg>
      <TransformField aria-label="Skew vertically" defaultValue="---" />
    </TransformRow>
    <TransformActions>
      <button aria-label="Copy and apply transform">
        <Svg w={14} h={11}>
          <path d="M0 1h5l1 1h8v7h-2v2H4V9H0z" fill="#999" />
        </Svg>
      </button>
      <button aria-label="Reset">
        <Svg w={12} h={11}>
          <path d="M1 1h9v9H1z" fill="#999" />
          <path d="M3 7l5-4M8 7V3H5" stroke="#efefef" />
        </Svg>
      </button>
    </TransformActions>
  </TransformForm>
);

const Library = () => (
  <>
    <LibraryBar>
      <SelectBox $grow>
        <select aria-label="Library document">
          <option>9-pong</option>
        </select>
        <Chevron />
      </SelectBox>
      <button aria-label="Pin current library">
        <Svg w={14} h={11}>
          <path d="M0 5.500h5M5.500 1v9M6 3.500h4M6 7.500h4M10.500 1v9l2.500-1V2z" stroke="#555" />
        </Svg>
      </button>
      <button aria-label="New library panel">
        <Svg w={15} h={12}>
          <path d="M.5.500h8v8h-8z" fill="#bfe3ff" stroke="#4a4a88" />
          <path d="M5.500 3.500h8v8h-8z" fill="#e8f4ff" stroke="#4a4a88" />
          <path d="M3 7.500h7M8 5l3 2.500L8 10" stroke="#1515b5" strokeWidth="1.300" />
        </Svg>
      </button>
    </LibraryBar>
    <ItemCount>2 items</ItemCount>
    <Preview />
    <Listing>
      <TableHolder>
        <ItemTable>
          <thead>
            <tr>
              <th>Name</th>
              <th>Type</th>
            </tr>
          </thead>
          <tbody>
            {ITEMS.map((item) => (
              <tr key={item.name}>
                <td>
                  <ItemName>
                    <ClipIcon />
                    {item.name}
                  </ItemName>
                </td>
                <td>{item.type}</td>
              </tr>
            ))}
          </tbody>
        </ItemTable>
      </TableHolder>
      <ListSide>
        <button aria-label="Sort order">
          <Svg w={7} h={8}>
            <path d="M3 1.500h1M2 3.500h3M1 5.500h5M0 7.500h7" stroke="#000" />
          </Svg>
        </button>
        <button aria-label="Wide view">
          <Svg w={10} h={9}>
            <path d="M.5 1h9v7.500h-9z" fill="#fff" stroke="#000" />
            <path d="M0 1h10" stroke="#000" strokeWidth="2" />
          </Svg>
        </button>
        <button aria-label="Narrow view">
          <Svg w={6} h={9}>
            <path d="M.5 1h4v7.500h-4z" fill="#fff" stroke="#000" />
            <path d="M0 1h5" stroke="#000" strokeWidth="2" />
          </Svg>
        </button>
        <ScrollBar vertical size={15} parts={[0, 16, 271]} name="Items" />
      </ListSide>
    </Listing>
    <LibraryFooter>
      <IconButton aria-label="New symbol">
        <NewSymbol />
      </IconButton>
      <IconButton aria-label="New folder">
        <Folder />
      </IconButton>
      <IconButton aria-label="Item properties">
        <InfoDot />
      </IconButton>
      <IconButton $gap={18} aria-label="Delete item">
        <Trash color="#aaa" />
      </IconButton>
      <ScrollBar size={15} parts={[0, 31, 68]} name="Columns" />
    </LibraryFooter>
  </>
);

const Properties = () => (
  <Floating>
    <FloatHandle>
      <button aria-label="Close panel">
        <Close size={7} />
      </button>
    </FloatHandle>
    <FloatMain>
      <FloatTabs>
        <Disclosure aria-label="Toggle Properties">
          <Svg w={11} h={9}>
            <path d="M0 1h11L5.500 7z" fill="#fff" />
          </Svg>
        </Disclosure>
        <PanelTab $active>Properties</PanelTab>
        <PanelTab>Filters</PanelTab>
        <TabRule $light />
        <PanelTab>Parameters</PanelTab>
        <MenuEnd aria-label="Properties options">
          <PanelMenu />
        </MenuEnd>
      </FloatTabs>
      <PropsBody>
        <PropsLeft>
          <DocInfo>
            <DocIcon>
              <BigF />
            </DocIcon>
            <div>
              <p>Document</p>
              <p>9-pong</p>
            </div>
          </DocInfo>
        </PropsLeft>
        <PropsRule />
        <PropsRight>
          <PropsGroup>
            <PropsRow>
              <label htmlFor="size">Size:</label>
              <PushButton id="size">500 x 200 pixels</PushButton>
              <Inline $gap={3}>
                Background:
                <ColorSwatch color="#fff" label="Background color" />
                <RateLabel>
                  Frame rate:
                  <input defaultValue="30" />
                  fps
                </RateLabel>
              </Inline>
              <CornerButton aria-label="Help">
                <Svg w={14}>
                  <circle cx="7" cy="7" r="6" fill="#fff" stroke="#333" />
                  <path d="M5 5.500c0-2.500 4-2.500 4 0 0 1.500-2 1.500-2 3M7 9.500v1.500" stroke="#000" strokeWidth="1.500" />
                </Svg>
              </CornerButton>
            </PropsRow>
            <PropsRow>
              <label htmlFor="publish">Publish:</label>
              <PushButton id="publish">Settings...</PushButton>
              <Inline $gap={18}>
                <Fact>
                  <span>Player:</span>
                  <span>8</span>
                </Fact>
                <Fact>
                  <span>ActionScript:</span>
                  <span>2</span>
                </Fact>
                <Fact>
                  <span>Profile:</span>
                  <span>Default</span>
                </Fact>
              </Inline>
            </PropsRow>
          </PropsGroup>
          <PropsGroup $last>
            <PropsRow>
              <label htmlFor="device">Device:</label>
              <PushButton id="device" $pressed>
                Settings...
              </PushButton>
              <span />
              <CornerButton aria-label="Accessibility">
                <Svg w={14}>
                  <circle cx="7" cy="7" r="6.500" fill="#1550a8" />
                  <circle cx="7" cy="3.300" r="1.200" fill="#fff" />
                  <path d="M2.500 5.500L7 6l4.500-.5M7 6v2.500L4.500 12M7 8.500L9.500 12" stroke="#fff" strokeWidth="1.500" />
                </Svg>
              </CornerButton>
            </PropsRow>
            <Corner aria-label="Collapse">
              <Svg w={9} h={6}>
                <path d="M1 5.500L4.500 1 8 5.500z" fill="#fff" stroke="#000" />
              </Svg>
            </Corner>
          </PropsGroup>
        </PropsRight>
      </PropsBody>
    </FloatMain>
  </Floating>
);

const App = () => (
  <Window>
    <GlobalStyle />
    <TitleBar>
      <TitleIcon>
        <FlashLogo />
      </TitleIcon>
      <h1>Macromedia Flash Professional 8 - [9-pong]</h1>
      <WindowButtons>
        <button aria-label="Minimize">
          <Minimize />
        </button>
        <button aria-label="Restore">
          <Restore />
        </button>
        <button aria-label="Close">
          <Close />
        </button>
      </WindowButtons>
    </TitleBar>
    <MenuBar>
      {MENUS.map((menu) => (
        <button key={menu}>{menu}</button>
      ))}
    </MenuBar>
    <Workspace>
      <Tools />
      <DocumentWindow>
        <DocTabs>
          <DocTab>Untitled-1</DocTab>
          <DocTab $active>9-pong</DocTab>
          <DocButtons>
            <button aria-label="Minimize document">
              <Minimize />
            </button>
            <button aria-label="Restore document">
              <Restore />
            </button>
            <button aria-label="Close document">
              <Close />
            </button>
          </DocButtons>
        </DocTabs>
        <EditBar>
          <TimelineToggle>Timeline</TimelineToggle>
          <Divider $gap={4} />
          <button aria-label="Back">
            <Svg w={22} h={12}>
              <path d="M3 6l5-5v3h8v4H8v3z" fill="#ccc" />
            </Svg>
          </button>
          <Divider $gap={4} />
          <SceneName>
            <Clapper />
            Scene 1
          </SceneName>
          <EditBarEnd>
            <Divider $gap={0} />
            <button aria-label="Edit scene">
              <Clapper caret />
            </button>
            <button aria-label="Edit symbols">
              <Shapes />
            </button>
            <SelectBox>
              <select aria-label="Zoom level">
                <option>100%</option>
              </select>
              <Chevron />
            </SelectBox>
          </EditBarEnd>
        </EditBar>
        <TimelinePanel />
        <StageArea />
      </DocumentWindow>
      <Splitter>
        <button aria-label="Collapse panels">
          <Svg w={5} h={8}>
            <path d="M1 0v8l4-4z" fill="#fff" />
          </Svg>
        </button>
      </Splitter>
      <Dock>
        <Header title="Color" />
        <Header title="Align & Info & Transform" open menu />
        <PanelTabs>
          <PanelTab>Align</PanelTab>
          <TabRule />
          <PanelTab>Info</PanelTab>
          <PanelTab $active>Transform</PanelTab>
        </PanelTabs>
        <TransformPanel />
        <Header title="Library - 9-pong" open menu />
        <Library />
      </Dock>
      <WindowEdge />
    </Workspace>
    <Properties />
  </Window>
);

export default App;
